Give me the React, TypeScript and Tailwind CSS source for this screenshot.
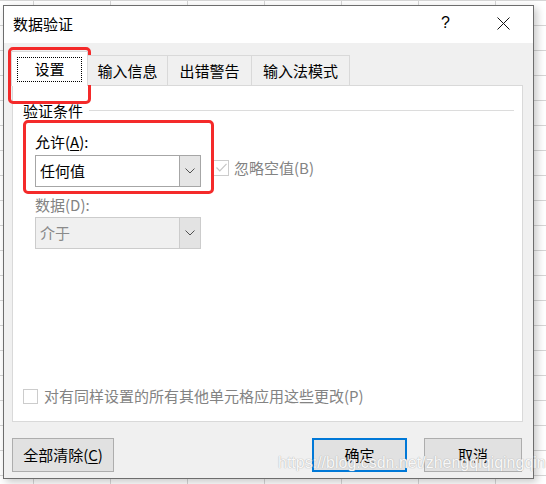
import type { ReactNode } from 'react'

const tabs = [
  { label: '输入信息', w: 'w-[80px]' },
  { label: '出错警告', w: 'w-[84px]' },
  { label: '输入法模式', w: 'w-[98px]' },
]

function Chevron() {
  return (
    <svg width="10" height="6" viewBox="0 0 10 6" fill="none">
      <polyline points="0.5,0.5 5,5 9.5,0.5" stroke="#505050" strokeWidth="1" />
    </svg>
  )
}

function Combo({ value, disabled }: { value: string; disabled?: boolean }) {
  return (
    <div
      className={`flex h-[32px] w-[166px] border ${
        disabled ? 'border-[#cccccc] bg-[#f0f0f0] text-[#8a8a8a]' : 'border-[#a6a6a6] bg-white text-black'
      }`}
    >
      <div className="flex flex-1 items-center pl-[4px]">{value}</div>
      <div
        className={`flex w-[21px] items-center justify-center border-l ${
          disabled ? 'border-[#cccccc] bg-[#e3e3e3]' : 'border-[#a6a6a6] bg-[#e5e5e5]'
        }`}
      >
        <Chevron />
      </div>
    </div>
  )
}

function Button({ children, primary, w }: { children: ReactNode; primary?: boolean; w: string }) {
  return (
    <div
      className={`flex h-[34px] items-center justify-center bg-[#e1e1e1] ${w} ${
        primary ? 'border-2 border-[#0078d7]' : 'border border-[#adadad]'
      }`}
    >
      {children}
    </div>
  )
}

export default function App() {
  return (
    <div className="relative h-[484px] w-[546px] overflow-hidden bg-white bg-[linear-gradient(#d6d6d6_1px,transparent_1px),linear-gradient(90deg,#d6d6d6_1px,transparent_1px)] bg-[size:77px_25px] bg-[position:33px_0px] pl-[3px] pt-[5px] font-['Noto_Sans_CJK_SC','Microsoft_YaHei',sans-serif] text-[15px] leading-[20px] text-black">
      <div className="flex h-[474px] w-[531px] flex-col border border-[#6d6d6d] bg-[#f0f0f0] shadow-[3px_3px_8px_rgba(0,0,0,0.22)]">
        {/* title bar */}
        <div className="flex h-[37px] items-center bg-white pl-[9px] pr-[23px]">
          <span className="mt-[-2px]">数据验证</span>
          <span className="ml-auto mr-[47px] mt-[-4px] font-['Liberation_Sans',sans-serif] text-[16px]">?</span>
          <svg width="13" height="13" viewBox="0 0 13 13" className="mt-[-3px]">
            <path d="M0.5 0.5 L12.5 12.5 M12.5 0.5 L0.5 12.5" stroke="#111" strokeWidth="1" />
          </svg>
        </div>

        <div className="flex flex-1 flex-col pl-[8px] pr-[10px] pt-[12px]">
          {/* tabs */}
          <div className="relative z-10 flex h-[30px] items-end">
            <div className="mb-[-1px] ml-[-1px] flex h-[35px] w-[77px] items-center justify-center border-x border-t border-[#d9d9d9] bg-white">
              <div className="flex h-[25px] w-[65px] items-center justify-center border border-dotted border-black">
                设置
              </div>
            </div>
            {tabs.map((t) => (
              <div
                key={t.label}
                className={`flex h-[30px] items-center justify-center border-r border-t border-[#d9d9d9] bg-[#f0f0f0] ${t.w}`}
              >
                {t.label}
              </div>
            ))}
          </div>

          {/* panel */}
          <div className="flex h-[337px] flex-col border border-[#d9d9d9] bg-white pl-[10px] pr-[8px] pt-[15px] pb-[15px]">
            <div className="flex items-center">
              <span>验证条件</span>
              <div className="ml-[6px] mt-[-2px] h-px flex-1 bg-[#dcdcdc]" />
            </div>

            <div className="pl-[12px]">
              <div className="mt-[11px]">
                允许(<span className="underline underline-offset-2">A</span>):
              </div>
              <div className="mt-[3px] flex items-center">
                <Combo value="任何值" />
                <div className="ml-[12px] mt-[-7px] flex items-center text-[#838383]">
                  <div className="flex h-[16px] w-[16px] items-center justify-center border border-[#cccccc]">
                    <svg width="11" height="9" viewBox="0 0 11 9" fill="none">
                      <polyline points="0.5,4.5 3.8,7.8 10.5,0.8" stroke="#c6c6c6" strokeWidth="1.2" />
                    </svg>
                  </div>
                  <span className="ml-[5px]">忽略空值(B)</span>
                </div>
              </div>
              <div className="mt-[8px] text-[#838383]">数据(D):</div>
              <div className="mt-[2px]">
                <Combo value="介于" disabled />
              </div>
            </div>

            <div className="mt-auto flex items-center text-[#838383]">
              <div className="h-[15px] w-[15px] border border-[#cccccc] bg-white" />
              <span className="ml-[6px]">对有同样设置的所有其他单元格应用这些更改(P)</span>
            </div>
          </div>

          {/* buttons */}
          <div className="mt-[16px] flex items-center">
            <Button w="w-[102px]">
              全部清除(<span className="underline underline-offset-2">C</span>)
            </Button>
            <div className="ml-auto mr-[1px] flex gap-[17px]">
              <Button primary w="w-[95px]">
                确定
              </Button>
              <Button w="w-[98px]">取消</Button>
            </div>
          </div>
        </div>
      </div>

      {/* screenshot annotations */}
      <div className="pointer-events-none absolute left-[8px] top-[47px] h-[57px] w-[83px] rounded-[5px] border-[3px] border-[#f42a2a]" />
      <div className="pointer-events-none absolute left-[23px] top-[120px] h-[74px] w-[191px] rounded-[5px] border-[3px] border-[#f42a2a]" />
      <div className="pointer-events-none absolute left-[278px] top-[453px] font-['Liberation_Sans',sans-serif] text-[16px] leading-[20px] text-white/90 [text-shadow:0_0_1px_#b4b4b4,0_0_1px_#b4b4b4]">
        https://blog.csdn.net/zhengqiqiqingqin
      </div>
    </div>
  )
}
